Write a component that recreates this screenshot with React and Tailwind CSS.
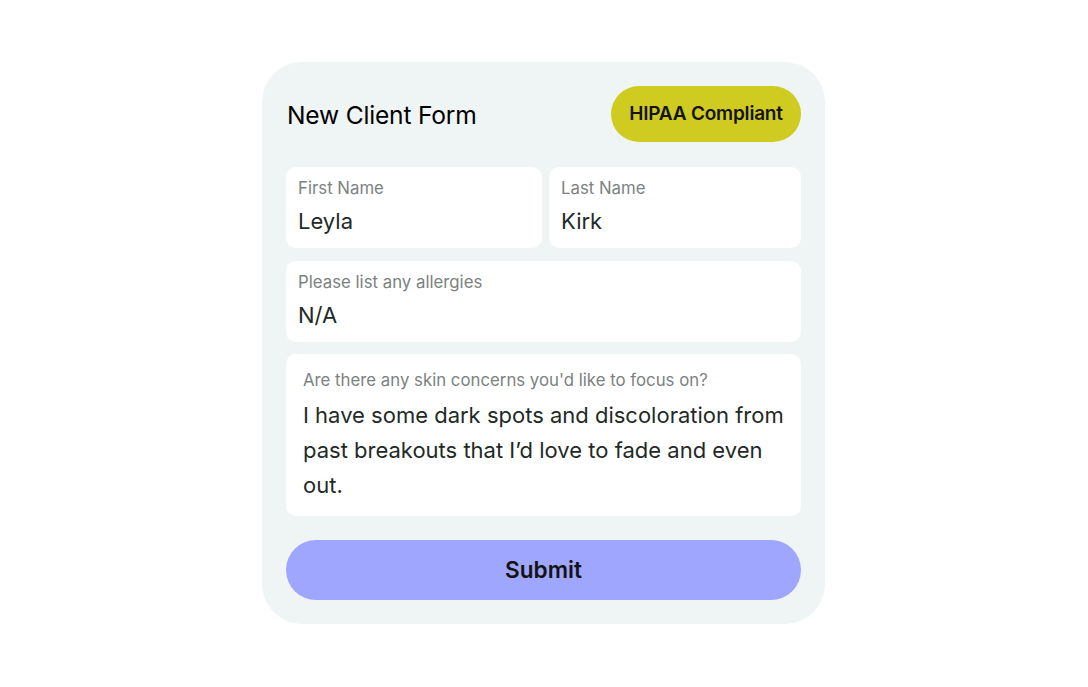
import React from 'react';

const Field = ({ label, value, className = '' }) => (
  <div className={`bg-white rounded-[10px] h-[81px] px-3 pt-[11px] ${className}`}>
    <p className="text-[16.8px] leading-[20px] text-[#7b8280]">{label}</p>
    <p className="mt-[10px] text-[22px] leading-[26px] text-[#1f2a27]">{value}</p>
  </div>
);

export default function App() {
  return (
    <div className="min-h-screen w-full bg-white pt-[62px] pl-[262px] font-['Inter',sans-serif]">
      <div className="w-[563px] h-[562px] rounded-[40px] bg-[#eff5f4] p-6 flex flex-col">
        {/* Header */}
        <div className="flex items-center justify-between h-14">
          <h1 className="pl-px pt-[3px] text-[24.6px] text-black tracking-[-0.2px]">New Client Form</h1>
          <span className="h-14 w-[190px] rounded-full bg-[#cfcb21] flex items-center justify-center text-[19px] font-semibold text-[#141414] tracking-[-0.2px]">
            HIPAA Compliant
          </span>
        </div>

        {/* Name row */}
        <div className="mt-[25px] flex gap-[7px]">
          <Field label="First Name" value="Leyla" className="w-[256px]" />
          <Field label="Last Name" value="Kirk" className="flex-1" />
        </div>

        <Field label="Please list any allergies" value="N/A" className="mt-[13px]" />

        {/* Skin concerns */}
        <div className="mt-3 bg-white rounded-[10px] h-[162px] pl-[17px] pr-3 pt-[16px]">
          <p className="text-[16.8px] leading-[20px] text-[#7b8280]">Are there any skin concerns you'd like to focus on?</p>
          <p className="mt-[8px] text-[22px] leading-[35px] text-[#1f2a27]">
            I have some dark spots and discoloration from past breakouts that I’d love to fade and even out.
          </p>
        </div>

        <button className="mt-6 h-[60px] w-full rounded-full bg-[#9fa6fe] text-[22.6px] font-semibold text-[#141414]">
          Submit
        </button>
      </div>
    </div>
  );
}
